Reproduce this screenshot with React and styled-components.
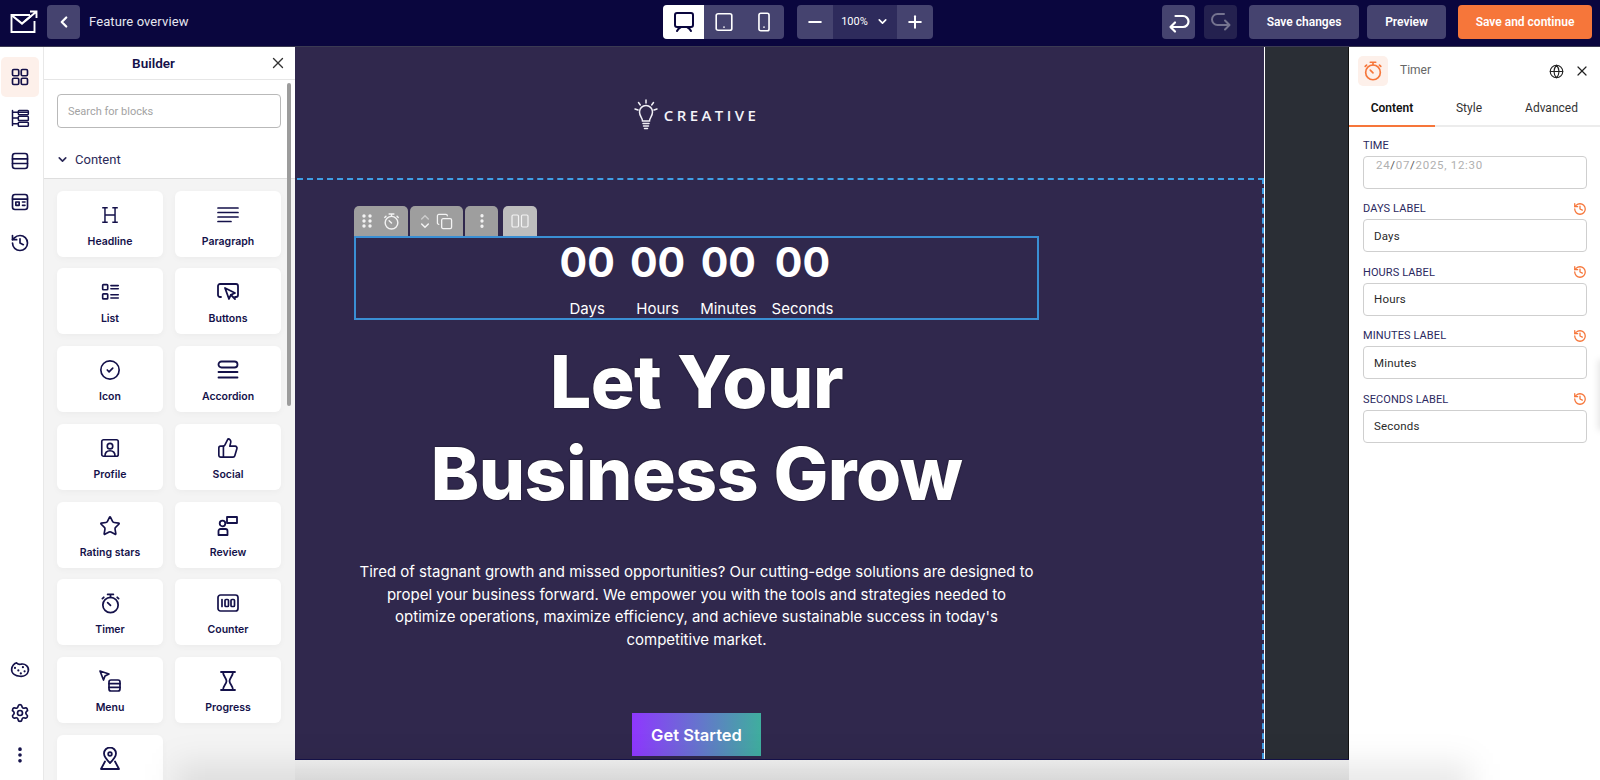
import React from "react";
import styled, { createGlobalStyle } from "styled-components";
import { CircleCheck, ThumbsUp, Star, Settings, EllipsisVertical, History, Globe, X, ChevronLeft, ChevronDown, Minus, Plus, Copy } from "lucide-react";

const Global = createGlobalStyle`
  html, body { margin: 0; padding: 0; background: #fff; }
  * { box-sizing: border-box; }
  body { font-family: Roboto, "Liberation Sans", sans-serif; overflow: hidden; }
`;

const Page = styled.div`
  width: 1600px; height: 780px; display: flex; flex-direction: column; overflow: hidden; position: relative;
`;
const TopBar = styled.header`
  height: 47px; flex: none; background: #0a063e; display: flex; align-items: center; padding: 0 8px 3px 0; border-bottom: 1px solid #3b3a52;
`;
const Brand = styled.div`
  width: 47px; display: flex; justify-content: center; color: #fff;
`;
const TopBtn = styled.button`
  width: ${p => p.$w || 33}px; height: 34px; border: 0; padding: 0; border-radius: 4px;
  background: ${p => p.$bg || "#45436f"}; color: ${p => p.$fg || "#fff"};
  font: 600 12px Roboto, sans-serif; display: flex; align-items: center; justify-content: center; flex: none;
  margin-left: ${p => p.$ml || 0}px;
`;
const PageTitle = styled.span`
  color: #e6e6f0; font-size: 13px; margin-left: 9px; width: 574px; letter-spacing: .1px;
`;
const Segment = styled.div`
  display: flex; height: 34px; border-radius: 4px; overflow: hidden; background: #45436f; flex: none; margin-left: ${p => p.$ml || 0}px;
`;
const SegBtn = styled.div`
  width: ${p => p.$w}px; display: flex; align-items: center; justify-content: center; gap: 8px;
  background: ${p => p.$on ? "#fff" : p.$dark ? "#2e2b5c" : "transparent"};
  color: ${p => p.$on ? "#0a063e" : "#fff"}; font: 400 11px Roboto, sans-serif;
`;
const Spacer = styled.div` flex: 1; `;

const Body = styled.div` flex: 1; display: flex; min-height: 0; `;
const Rail = styled.nav`
  width: 44px; flex: none; background: #fff; border-right: 1px solid #e8e8e8; display: flex; flex-direction: column; align-items: center; padding: 10px 0 5px; color: #14114a;
`;
const RailBtn = styled.div`
  width: 38px; height: 40px; margin-left: -4px; border-radius: 5px; display: flex; align-items: center; justify-content: center;
  background: ${p => p.$on ? "#fdf0ea" : "transparent"}; margin-bottom: ${p => p.$mb ?? 1}px;
`;
const Builder = styled.aside`
  width: 251px; flex: none; background: #fff; display: flex; flex-direction: column; position: relative; overflow: hidden;
`;
const BuilderHead = styled.div`
  height: 33px; flex: none; display: flex; align-items: center; justify-content: center; padding-right: 32px; border-bottom: 1px solid #e6e6e6; position: relative; color: #14114a; font: 600 13.5px Roboto, sans-serif;
`;
const HeadClose = styled.span`
  position: absolute; right: 8px; top: 7px; color: #333; display: flex;
`;
const SearchBox = styled.div`
  margin: 14px 14px 0 13px; height: 34px; flex: none; border: 1px solid #b9b9b9; border-radius: 4px; color: #a3a3a3; font-size: 11px; display: flex; align-items: center; padding-left: 10px;
`;
const SectionRow = styled.div`
  height: 51px; flex: none; display: flex; align-items: center; gap: 6px; padding: 13px 0 0 12px; color: #2c2a58; font-size: 13px; border-bottom: 1px solid #dedede;
`;
const CardGrid = styled.div`
  flex: 1; background: #f4f4f4; padding: 11.5px 14px 0 13px; display: grid; grid-template-columns: 106px 106px; grid-auto-rows: 66px; column-gap: 12px; row-gap: 11.8px; align-content: start; overflow: hidden;
`;
const Card = styled.div`
  background: #fff; border-radius: 6px; box-shadow: 0 2px 6px rgba(0,0,0,.035); display: flex; flex-direction: column; align-items: center; padding-top: 12px; color: #14114a;
`;
const CardIcon = styled.div` height: 24px; display: flex; align-items: center; justify-content: center; `;
const CardLabel = styled.div` font: 600 10.5px Inter, sans-serif; margin-top: 8px; line-height: 13px; `;
const Thumb = styled.div`
  position: absolute; right: 4px; top: 36px; width: 4px; height: 323px; border-radius: 2px; background: #9c9c9c;
`;

const Workspace = styled.main` flex: 1; display: flex; flex-direction: column; min-width: 0; `;
const Stage = styled.div` height: 713px; flex: none; display: flex; border-bottom: 1px solid #15124a; `;
const Canvas = styled.div` width: 970px; flex: none; background: #30284d; color: #fff; display: flex; flex-direction: column; border-right: 1px solid #fff; `;
const LogoBand = styled.div`
  height: 131px; flex: none; display: flex; align-items: center; justify-content: center; padding: 4px 225px 0 59px;
`;
const LogoText = styled.span` font: 600 15px "Open Sans", sans-serif; letter-spacing: 3.4px; color: #f4f3f8; margin-left: 6px; `;
const Section = styled.section`
  flex: 1; border-top: 2px dashed #3f9fe6; border-right: 2px dashed #3f9fe6; padding: 26px 0 0 57px; margin-left: 2px;
`;
const Column = styled.div` width: 685px; display: flex; flex-direction: column; align-items: center; `;
const BlockTools = styled.div` align-self: flex-start; display: flex; height: 30px; `;
const ToolTab = styled.div`
  width: ${p => p.$w}px; margin-right: ${p => p.$mr || 0}px; background: ${p => p.$light ? "#bdbdbd" : "#9e9e9e"}; border-radius: 5px 5px 0 0; display: flex; align-items: center; justify-content: center; gap: ${p => p.$gap || 0}px; color: #f3f3f3;
`;
const TimerBox = styled.div`
  width: 685px; height: 84px; border: 2px solid #3a8fd4; display: flex; justify-content: center; gap: 15px;
`;
const TimerCol = styled.div` display: flex; flex-direction: column; align-items: center; `;
const Digits = styled.div` font: 700 41px/48px Inter, sans-serif; `;
const DigitLabel = styled.div` font: 400 15px/20px Inter, sans-serif; margin-top: 13px; `;
const Headline = styled.h1`
  margin: 16px 0 0; font: 800 73px/92px Inter, sans-serif; text-align: center; letter-spacing: -.5px; text-shadow: 0 0 1.5px #000;
`;
const Lead = styled.p`
  margin: 41px 0 0; width: 678px; font: 400 15px/22.6px Inter, sans-serif; text-align: center;
`;
const Cta = styled.div`
  margin-top: 62px; width: 129px; height: 43px; display: flex; align-items: center; justify-content: center; font: 600 16.5px Inter, sans-serif; background: linear-gradient(90deg, #8f37ff, #3fae9e);
`;
const Gutter = styled.div` flex: 1; background: #2a2e35; border-right: 1px solid #111; `;
const Strip = styled.div` flex: 1; background: linear-gradient(#f3f3f3, #ebebeb); `;

const Inspector = styled.aside` width: 251px; flex: none; background: #fff; display: flex; flex-direction: column; position: relative; `;
const InspHead = styled.div` height: 50px; flex: none; display: flex; align-items: flex-start; padding: 9px 10px 0 9px; color: #222; `;
const InspIcon = styled.div` width: 30px; height: 30px; border-radius: 5px; background: #fdf0ea; color: #f6763a; display: flex; align-items: center; justify-content: center; `;
const InspName = styled.span` font-size: 12px; color: #666; margin: 7px 0 0 12px; flex: 1; line-height: 14px; `;
const InspTools = styled.div` display: flex; gap: 10px; align-items: center; margin-top: 7px; `;
const Tabs = styled.div` height: 30px; flex: none; display: grid; grid-template-columns: 86px 68px 97px; border-bottom: 2px solid #ececec; `;
const Tab = styled.div`
  display: flex; justify-content: center; padding-top: 4px; font-size: 12px; font-weight: ${p => p.$on ? 600 : 400}; color: ${p => p.$on ? "#111" : "#333"};
  box-shadow: ${p => p.$on ? "0 2px 0 #f6763a" : "none"}; height: 28px;
`;
const Form = styled.div` padding: 10px 13px 0 14px; display: flex; flex-direction: column; `;
const FieldHead = styled.div` height: 19px; display: flex; align-items: center; justify-content: space-between; font-size: 11px; color: #2b2860; letter-spacing: .1px; padding-bottom: 2px; `;
const Reset = styled.span` color: #f6763a; display: flex; `;
const FieldBox = styled.div`
  height: 33px; border: 1px solid #cfcfcf; border-radius: 4px; display: flex; align-items: ${p => p.$top ? "flex-start" : "center"}; padding: ${p => p.$top ? "1px 0 0 12px" : "0 0 0 10px"}; font-size: 11.5px; margin-bottom: 11.4px;
  color: ${p => p.$top ? "#b0b0b0" : "#2a2a2a"}; letter-spacing: ${p => p.$top ? ".7px" : ".2px"}; font-weight: 400;
`;
const Slash = styled.span` color: #555; `;
const Haze = styled.div`
  position: absolute; left: 175px; right: 130px; bottom: -34px; height: 50px; background: rgba(0,0,0,.09); filter: blur(16px); pointer-events: none;
`;
const EdgeShade = styled.div`
  position: absolute; right: -6px; top: 312px; width: 8px; height: 72px; border-radius: 4px; background: rgba(0,0,0,.1); filter: blur(3px); pointer-events: none;
`;

const Svg = ({ s = 20, w = 2, children }) => (
  <svg width={s} height={s} viewBox="0 0 24 24" fill="none" stroke="currentColor" strokeWidth={w} strokeLinecap="round" strokeLinejoin="round">{children}</svg>
);
const I = {
  Logo: () => <svg width="28" height="24" viewBox="0 0 28 24" fill="none" stroke="currentColor" strokeWidth="1.9"><path d="M20 5H1.500v17h23V11" /><path d="M2 5.500l10 8 9-7.500" strokeWidth="2.200" /><path d="M15 11L26 2M20 1.500h6.500V8" /></svg>,
  Monitor: () => <Svg s={24} w={2}><rect x="3" y="3" width="18" height="14" rx="2" /><path d="M5 21c1-2 2-3 4-4M19 21c-1-2-2-3-4-4M9 17h6" /></Svg>,
  Tablet: () => <Svg s={22} w={1.8}><rect x="3.500" y="3" width="17" height="18" rx="2" /><path d="M12 17.500v.1" /></Svg>,
  Phone: () => <Svg s={22} w={1.8}><rect x="6.500" y="2.500" width="11" height="19" rx="2" /><path d="M12 17.500v.1" /></Svg>,
  Undo: () => <Svg s={24} w={2.2}><path d="M8 12.500L3.500 17 8 21.500M3.500 17H16a5.500 5.500 0 0 0 0-11H8.500" /></Svg>,
  Redo: () => <Svg s={24} w={2}><path d="M15 4H8.500a5.500 5.500 0 0 0 0 11H20M16 10.500l4.500 4.500-4.500 4.500" /></Svg>,
  Grid: () => <Svg s={20}><rect x="3" y="3" width="7.500" height="7.500" rx="1.500" /><rect x="13.500" y="3" width="7.500" height="7.500" rx="1.500" /><rect x="3" y="13.500" width="7.500" height="7.500" rx="1.500" /><rect x="13.500" y="13.500" width="7.500" height="7.500" rx="1.500" /></Svg>,
  Tree: () => <Svg s={20} w={1.8}><path d="M3 3v18M3 5h18M3 12h7M3 19h7" /><rect x="10" y="3" width="12" height="5" rx="1" /><rect x="10" y="10" width="12" height="5" rx="1" /><rect x="10" y="17" width="12" height="5" rx="1" /></Svg>,
  Rows: () => <Svg s={20}><rect x="3" y="3" width="18" height="18" rx="3" /><path d="M3 9.500h18M3 15h18" /></Svg>,
  Form: () => <Svg s={20}><rect x="3" y="3" width="18" height="18" rx="3" /><path d="M3 8.500h18" /><rect x="7" y="12" width="4" height="4" /><path d="M15 12h3M15 16h3" /></Svg>,
  Palette: () => <Svg s={20}><path d="M8 3.500c2 2.500 3 2 5.500 1.500C18 4 23 8 22 13c-.8 4.500-5 7-10 6.500S1.500 16.500 2 11c.3-3.500 3-7 6-7.500z" /><path d="M10 12.500v.1M15.500 8.500v.1M17.500 13.500v.1M13 16v.1M6 9.500v.1" strokeWidth="2.600" /></Svg>,
  H: () => <svg width="22" height="22" viewBox="0 0 24 24" fill="none" stroke="currentColor" strokeWidth="1.600"><path d="M6.500 4v16M17.500 4v16M6.500 12h11M3.500 4h6M14.500 4h6M3.500 20h6M14.500 20h6" /></svg>,
  Para: () => <Svg s={24} w={1.7}><path d="M2 5h20M2 9.500h20M2 14h20M2 18.500h13" /></Svg>,
  List: () => <Svg s={22} w={1.8}><rect x="4" y="4" width="5.500" height="5.500" rx=".8" /><rect x="4" y="14" width="5.500" height="5.500" rx=".8" /><path d="M13 5h8M13 8.500h8M13 15h8M13 18.500h8" /></Svg>,
  Btn: () => <Svg s={24} w={1.8}><path d="M5 17H4a2 2 0 0 1-2-2V6a2 2 0 0 1 2-2h16a2 2 0 0 1 2 2v9a2 2 0 0 1-2 2h-1" /><path d="M9 8l4 11 1.800-4.200L19 13z" /><path d="M15 15l4 4" /></Svg>,
  Accordion: () => <Svg s={24} w={1.8}><rect x="2.500" y="3.500" width="19" height="6" rx="3" /><path d="M2.500 14h19M2.500 19.500h19" /></Svg>,
  Profile: () => <Svg s={22} w={1.8}><rect x="3" y="3" width="18" height="18" rx="2" /><circle cx="12" cy="10" r="3" /><path d="M6.500 21c0-3.500 2-6 5.500-6s5.500 2.500 5.500 6" /></Svg>,
  Review: () => <Svg s={24} w={1.8}><circle cx="6.500" cy="9.500" r="2.800" /><path d="M2.500 21v-4a2 2 0 0 1 2-2h5a2 2 0 0 1 2 2v4z" /><path d="M11 9V3h10v6h-6z" /></Svg>,
  Timer: ({ s = 23 }) => <Svg s={s} w={1.8}><circle cx="12" cy="13.500" r="8" /><path d="M9 2.500h6M12 2.500v3M12 14l-3-3M19 5.500l1.500 1.500M5 5.500L3.500 7" /></Svg>,
  Counter: () => <Svg s={24} w={1.7}><rect x="2" y="4" width="20" height="16" rx="2.500" /><path d="M6 8.500v7" /><rect x="9" y="8.500" width="3.500" height="7" rx="1" /><rect x="15" y="8.500" width="3.500" height="7" rx="1" /></Svg>,
  Menu: () => <Svg s={24} w={1.7}><path d="M2 2l9 3-4 2-1.500 4z" /><rect x="11" y="11" width="11" height="11" rx="2" /><path d="M11 14.700h11M11 18.300h11" /></Svg>,
  Hour: () => <Svg s={24} w={1.8}><path d="M5 3h14M5 21h14M7 3c0 4 3.500 6 3.500 9S7 17 7 21M17 3c0 4-3.500 6-3.500 9s3.500 5 3.500 9" /></Svg>,
  Pin: () => <Svg s={24} w={1.8}><path d="M12 16c-3-3-6-6-6-9.500a6 6 0 0 1 12 0C18 10 15 13 12 16z" /><circle cx="12" cy="7" r="1.800" /><path d="M7 14.500L3 22h18l-4-7.500" /></Svg>,
  Dots: () => <svg width="12" height="16" viewBox="0 0 12 16" fill="currentColor"><circle cx="3" cy="3" r="1.700" /><circle cx="9" cy="3" r="1.700" /><circle cx="3" cy="8" r="1.700" /><circle cx="9" cy="8" r="1.700" /><circle cx="3" cy="13" r="1.700" /><circle cx="9" cy="13" r="1.700" /></svg>,
  UpDown: () => <svg width="10" height="17" viewBox="0 0 12 18" fill="none" stroke="currentColor" strokeWidth="1.800" strokeLinecap="round" strokeLinejoin="round"><path d="M2 6l4-4 4 4" opacity=".55" /><path d="M2 12l4 4 4-4" /></svg>,
  Cols: () => <svg width="18" height="16" viewBox="0 0 18 16" fill="none" stroke="currentColor" strokeWidth="1.200"><rect x="1" y="2" width="6.500" height="12" rx="1.200" /><rect x="10.500" y="2" width="6.500" height="12" rx="1.200" /></svg>,
  Bulb: () => <svg width="24" height="31" viewBox="0 0 24 31" fill="none" stroke="#f1f0f6" strokeWidth="1.500" strokeLinecap="round"><path d="M12 1v3M4.500 3.500l1.800 2.500M19.500 3.500L17.700 6M1 10l3 1M23 10l-3 1" /><path d="M8.500 22c0-3-3-4.500-3-9a6.500 6.500 0 0 1 13 0c0 4.500-3 6-3 9z" /><path d="M9 24.500h6M9.500 27h5M10.500 29.500h3" /></svg>,
};

const cards = [
  ["Headline", <I.H />], ["Paragraph", <I.Para />], ["List", <I.List />], ["Buttons", <I.Btn />],
  ["Icon", <CircleCheck size={22} strokeWidth={1.8} />], ["Accordion", <I.Accordion />], ["Profile", <I.Profile />], ["Social", <ThumbsUp size={22} strokeWidth={1.8} />],
  ["Rating stars", <Star size={22} strokeWidth={1.8} />], ["Review", <I.Review />], ["Timer", <I.Timer />], ["Counter", <I.Counter />],
  ["Menu", <I.Menu />], ["Progress", <I.Hour />], ["", <I.Pin />],
];
const units = [["00", "Days"], ["00", "Hours"], ["00", "Minutes"], ["00", "Seconds"]];
const fields = [["DAYS LABEL", "Days"], ["HOURS LABEL", "Hours"], ["MINUTES LABEL", "Minutes"], ["SECONDS LABEL", "Seconds"]];

export default function App() {
  return (
    <Page>
      <Global />
      <TopBar>
        <Brand><I.Logo /></Brand>
        <TopBtn><ChevronLeft size={18} strokeWidth={3} /></TopBtn>
        <PageTitle>Feature overview</PageTitle>
        <Segment>
          <SegBtn $w={41} $on><I.Monitor /></SegBtn>
          <SegBtn $w={40}><I.Tablet /></SegBtn>
          <SegBtn $w={40}><I.Phone /></SegBtn>
        </Segment>
        <Segment $ml={13}>
          <SegBtn $w={36}><Minus size={20} strokeWidth={2.4} /></SegBtn>
          <SegBtn $w={64} $dark>100%<ChevronDown size={13} strokeWidth={3} /></SegBtn>
          <SegBtn $w={36}><Plus size={20} strokeWidth={2.4} /></SegBtn>
        </Segment>
        <Spacer />
        <TopBtn><I.Undo /></TopBtn>
        <TopBtn $ml={9} $bg="#24214f" $fg="#75738f"><I.Redo /></TopBtn>
        <TopBtn $w={110} $ml={12}>Save changes</TopBtn>
        <TopBtn $w={79} $ml={8}>Preview</TopBtn>
        <TopBtn $w={134} $ml={12} $bg="#f6763a">Save and continue</TopBtn>
      </TopBar>
      <Body>
        <Rail>
          <RailBtn $on><I.Grid /></RailBtn>
          <RailBtn $mb={3}><I.Tree /></RailBtn>
          <RailBtn $mb={1}><I.Rows /></RailBtn>
          <RailBtn $mb={1}><I.Form /></RailBtn>
          <RailBtn><History size={20} strokeWidth={2} /></RailBtn>
          <Spacer />
          <RailBtn $mb={3}><I.Palette /></RailBtn>
          <RailBtn $mb={2}><Settings size={20} strokeWidth={2} /></RailBtn>
          <RailBtn $mb={0}><EllipsisVertical size={20} strokeWidth={2.4} /></RailBtn>
        </Rail>
        <Builder>
          <BuilderHead>Builder<HeadClose><X size={18} strokeWidth={1.8} /></HeadClose></BuilderHead>
          <SearchBox>Search for blocks</SearchBox>
          <SectionRow><ChevronDown size={13} strokeWidth={3} />Content</SectionRow>
          <CardGrid>
            {cards.map(([n, ic], i) => (
              <Card key={i}><CardIcon>{ic}</CardIcon>{n && <CardLabel>{n}</CardLabel>}</Card>
            ))}
          </CardGrid>
          <Thumb />
        </Builder>
        <Workspace>
          <Stage>
            <Canvas>
              <LogoBand><I.Bulb /><LogoText>CREATIVE</LogoText></LogoBand>
              <Section>
                <Column>
                  <BlockTools>
                    <ToolTab $w={54} $mr={2} $gap={9}><I.Dots /><I.Timer s={19} /></ToolTab>
                    <ToolTab $w={53} $mr={2} $gap={6}><I.UpDown /><Copy size={17} strokeWidth={1.8} /></ToolTab>
                    <ToolTab $w={33} $mr={5}><EllipsisVertical size={18} strokeWidth={2.4} /></ToolTab>
                    <ToolTab $w={34} $light><I.Cols /></ToolTab>
                  </BlockTools>
                  <TimerBox>
                    {units.map(([d, l]) => (
                      <TimerCol key={l}><Digits>{d}</Digits><DigitLabel>{l}</DigitLabel></TimerCol>
                    ))}
                  </TimerBox>
                  <Headline>Let Your<br />Business Grow</Headline>
                  <Lead>Tired of stagnant growth and missed opportunities? Our cutting-edge solutions are designed to propel your business forward. We empower you with the tools and strategies needed to optimize operations, maximize efficiency, and achieve sustainable success in today's competitive market.</Lead>
                  <Cta>Get Started</Cta>
                </Column>
              </Section>
            </Canvas>
            <Gutter />
          </Stage>
          <Strip />
        </Workspace>
        <Inspector>
          <InspHead>
            <InspIcon><I.Timer s={22} /></InspIcon>
            <InspName>Timer</InspName>
            <InspTools><Globe size={15} strokeWidth={1.8} /><X size={16} strokeWidth={1.8} /></InspTools>
          </InspHead>
          <Tabs>
            <Tab $on>Content</Tab>
            <Tab>Style</Tab>
            <Tab>Advanced</Tab>
          </Tabs>
          <Form>
            <FieldHead>TIME</FieldHead>
            <FieldBox $top>24<Slash>/</Slash>07<Slash>/</Slash>2025, 12:30</FieldBox>
            {fields.map(([label, val]) => (
              <React.Fragment key={label}>
                <FieldHead>{label}<Reset><History size={14} strokeWidth={2.2} /></Reset></FieldHead>
                <FieldBox>{val}</FieldBox>
              </React.Fragment>
            ))}
          </Form>
          <EdgeShade />
        </Inspector>
      </Body>
      <Haze />
    </Page>
  );
}
